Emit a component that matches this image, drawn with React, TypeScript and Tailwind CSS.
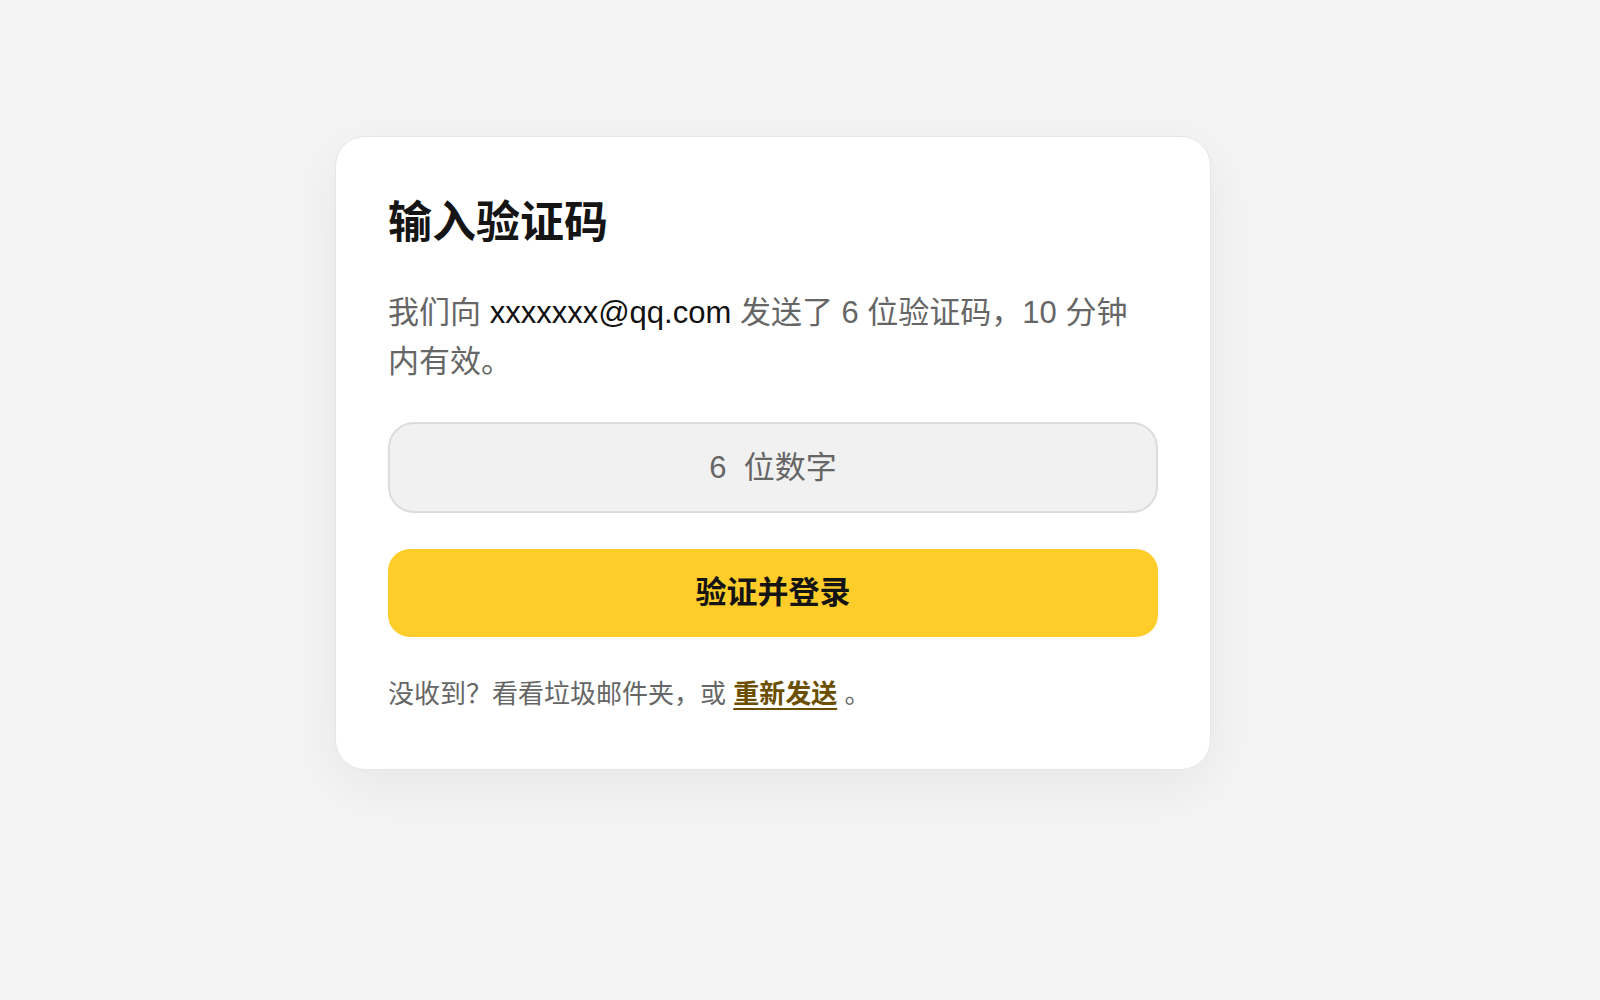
import React from "react";

export default function App() {
  const font = {
    fontFamily: '"Liberation Sans", "Noto Sans CJK SC", sans-serif',
  };
  return (
    <div className="min-h-[1000px] w-full bg-[#f4f4f5]" style={font}>
      <div className="pl-[335px] pt-[136px]">
        <div className="w-[876px] rounded-[30px] border border-[#e6e6e6] bg-white px-[52px] pt-[55px] pb-[55px] shadow-[0_16px_60px_rgba(0,0,0,0.06)]">
          <h1 className="text-[44px] font-bold leading-[62px] text-[#151515]">
            输入验证码
          </h1>
          <p className="mt-[34px] max-w-[760px] text-[31px] leading-[49px] text-[#666666]">
            我们向 <span className="text-[#111111]">xxxxxxx@qq.com</span> 发送了 6 位验证码，10 分钟内有效。
          </p>
          <input
            type="text"
            inputMode="numeric"
            placeholder={"6\u00A0\u00A0位数字"}
            className="mt-[36px] block h-[91px] w-full rounded-[26px] border-2 border-[#dcdcdc] bg-[#f1f1f1] text-center text-[31px] text-[#555555] outline-none placeholder:text-[#666666]"
          />
          <button className="mt-[36px] flex h-[88px] w-full items-center justify-center rounded-[22px] bg-[#ffcd29] text-[31px] font-bold text-[#141414]">
            验证并登录
          </button>
          <p className="mt-[37px] text-[26px] leading-[40px] text-[#666666]">
            没收到？看看垃圾邮件夹，或{" "}
            <a
              href="#"
              className="font-semibold text-[#6b4e00] underline decoration-2 underline-offset-[5px]"
            >
              重新发送
            </a>{" "}
            。
          </p>
        </div>
      </div>
    </div>
  );
}
